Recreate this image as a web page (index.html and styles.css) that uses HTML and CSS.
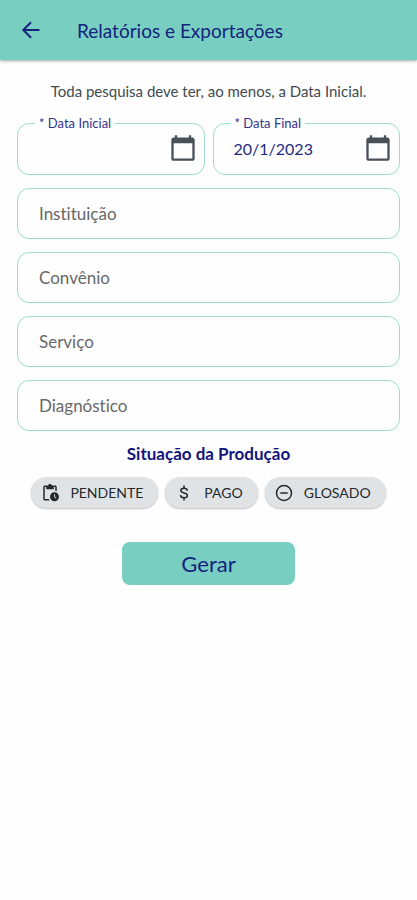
FILE: index.html
```html
<!DOCTYPE html>
<html lang="pt-BR">
<head>
    <meta charset="UTF-8">
    <meta name="viewport" content="width=device-width, initial-scale=1.0">
    <title>Relatórios e Exportações</title>
    <link rel="stylesheet" href="styles.css">
</head>
<body>
    <header>
        <button class="btn-voltar" type="button" aria-label="Voltar">
            <svg width="24" height="24" viewBox="0 0 24 24" fill="none" stroke="currentColor" stroke-width="2">
                <path d="M20.5 12H5M12 4.3L4.3 12l7.7 7.7"/>
            </svg>
        </button>
        <h1>Relatórios e Exportações</h1>
    </header>

    <main>
        <form class="form-relatorio">
            <p class="aviso">Toda pesquisa deve ter, ao menos, a Data Inicial.</p>

            <div class="datas">
                <fieldset class="campo-data">
                    <legend><label for="dataInicial">* Data Inicial</label></legend>
                    <div class="linha-data">
                        <input type="text" id="dataInicial">
                        <button class="btn-calendario" type="button" aria-label="Escolher data inicial">
                            <svg width="28" height="28" viewBox="0 0 24 24" fill="currentColor">
                                <path d="M20 3h-1V1h-2v2H7V1H5v2H4c-1.1 0-2 .9-2 2v16c0 1.1.9 2 2 2h16c1.1 0 2-.9 2-2V5c0-1.1-.9-2-2-2zm0 18H4V8h16v13z"/>
                            </svg>
                        </button>
                    </div>
                </fieldset>
                <fieldset class="campo-data">
                    <legend><label for="dataFinal">* Data Final</label></legend>
                    <div class="linha-data">
                        <input type="text" id="dataFinal" value="20/1/2023">
                        <button class="btn-calendario" type="button" aria-label="Escolher data final">
                            <svg width="28" height="28" viewBox="0 0 24 24" fill="currentColor">
                                <path d="M20 3h-1V1h-2v2H7V1H5v2H4c-1.1 0-2 .9-2 2v16c0 1.1.9 2 2 2h16c1.1 0 2-.9 2-2V5c0-1.1-.9-2-2-2zm0 18H4V8h16v13z"/>
                            </svg>
                        </button>
                    </div>
                </fieldset>
            </div>

            <input class="campo" type="text" placeholder="Instituição" aria-label="Instituição">
            <input class="campo" type="text" placeholder="Convênio" aria-label="Convênio">
            <input class="campo" type="text" placeholder="Serviço" aria-label="Serviço">
            <input class="campo" type="text" placeholder="Diagnóstico" aria-label="Diagnóstico">

            <h2>Situação da Produção</h2>
            <div class="chips">
                <button class="chip" type="button" aria-pressed="false">
                    <svg width="18" height="18" viewBox="0 0 24 24" fill="currentColor">
                        <path d="M18 11c-3.3 0-6 2.700-6 6s2.700 6 6 6 6-2.700 6-6-2.700-6-6-6zm1.700 8.400L17.400 17v-3.500h1.200v3l2 2-.9.9z"/>
                        <path d="M18 2h-3.200C14.400.8 13.300 0 12 0S9.600.8 9.200 2H5c-1.100 0-2 .9-2 2v16c0 1.100.9 2 2 2h6.700c-.6-.6-1-1.300-1.300-2H5V4h2v3h10V4h2v5.100c.7.1 1.400.3 2 .6V4c0-1.100-.9-2-2-2h-1z"/>
                    </svg>
                    PENDENTE
                </button>
                <button class="chip" type="button" aria-pressed="false">
                    <svg width="18" height="18" viewBox="0 0 24 24" fill="none" stroke="currentColor" stroke-width="2">
                        <path d="M12 2v4M12 18v4M16.5 9C16.2 7 14.5 5.8 12 5.8S7.8 7 7.8 8.8c0 4.4 8.7 2 8.7 6.4 0 1.900-1.700 3-4.300 3S7.500 17 7.300 14.800"/>
                    </svg>
                    PAGO
                </button>
                <button class="chip" type="button" aria-pressed="false">
                    <svg width="18" height="18" viewBox="0 0 24 24" fill="none" stroke="currentColor" stroke-width="2">
                        <circle cx="12" cy="12" r="10"/>
                        <path d="M7 12h10"/>
                    </svg>
                    GLOSADO
                </button>
            </div>

            <button class="btn-gerar" type="submit">Gerar</button>
        </form>
    </main>
</body>
</html>
```

FILE: styles.css
```css
* {
    box-sizing: border-box;
}

body {
    font-family: Lato, "Open Sans", sans-serif;
    font-variant-ligatures: none;
    background-color: #fefefe;
    color: #424b50;
    margin: 0;
}

button,
input {
    font-family: inherit;
    font-variant-ligatures: inherit;
}

button {
    border: none;
    padding: 0;
    background: none;
    cursor: pointer;
}

svg {
    display: block;
    flex: none;
}

header {
    display: flex;
    align-items: center;
    gap: 34px;
    height: 60px;
    padding: 0 19px;
    background-color: #79cec2;
    color: #14237c;
    box-shadow: 0 1px 3px rgba(0, 0, 0, 0.35);
}

.btn-voltar {
    color: inherit;
}

h1 {
    margin: 0;
    font-size: 19px;
    font-weight: 400;
}

.form-relatorio {
    display: flex;
    flex-direction: column;
    gap: 13px;
    padding: 20px 17px;
}

.aviso {
    margin: 0;
    font-size: 15px;
    line-height: 22px;
    text-align: center;
}

/* Datas */
.datas {
    display: grid;
    grid-template-columns: 1fr 1fr;
    gap: 8px;
}

.campo-data {
    min-width: 0;
    margin: 0;
    padding: 0 7px 0 17px;
    border: 1px solid #9bdccb;
    border-radius: 12px;
}

.campo-data legend {
    padding: 0 4px;
    color: #33358c;
    font-size: 13px;
    line-height: 16px;
}

.linha-data {
    display: flex;
    align-items: center;
    height: 43px;
    padding-bottom: 9px;
}

.linha-data input {
    flex: 1;
    min-width: 0;
    padding: 0 0 0 3px;
    border: none;
    outline: none;
    background: none;
    color: #1f2a80;
    font-size: 16px;
}

.btn-calendario {
    color: #485158;
}

/* Campos de busca */
.campo {
    width: 100%;
    height: 51px;
    padding: 0 21px;
    border: 1px solid #9bdccb;
    border-radius: 12px;
    outline: none;
    background: none;
    color: #1f2a80;
    font-size: 17px;
}

.campo::placeholder {
    color: #686868;
    opacity: 1;
}

/* Situação */
h2 {
    margin: 0;
    color: #14147c;
    font-size: 17px;
    line-height: 20px;
    font-weight: 700;
    text-align: center;
}

.chips {
    display: flex;
    justify-content: center;
    gap: 7px;
}

.chip {
    display: flex;
    align-items: center;
    gap: 11px;
    height: 31px;
    padding: 0 15px 0 10px;
    border-radius: 16px;
    background-color: #e0e3e6;
    color: #24292d;
    font-size: 14px;
    box-shadow: 0 1px 2px rgba(0, 0, 0, 0.25);
}

.btn-gerar {
    align-self: center;
    width: 45%;
    height: 43px;
    margin-top: 21px;
    border-radius: 8px;
    background-color: #79cec2;
    color: #14237c;
    font-size: 22px;
}
```
